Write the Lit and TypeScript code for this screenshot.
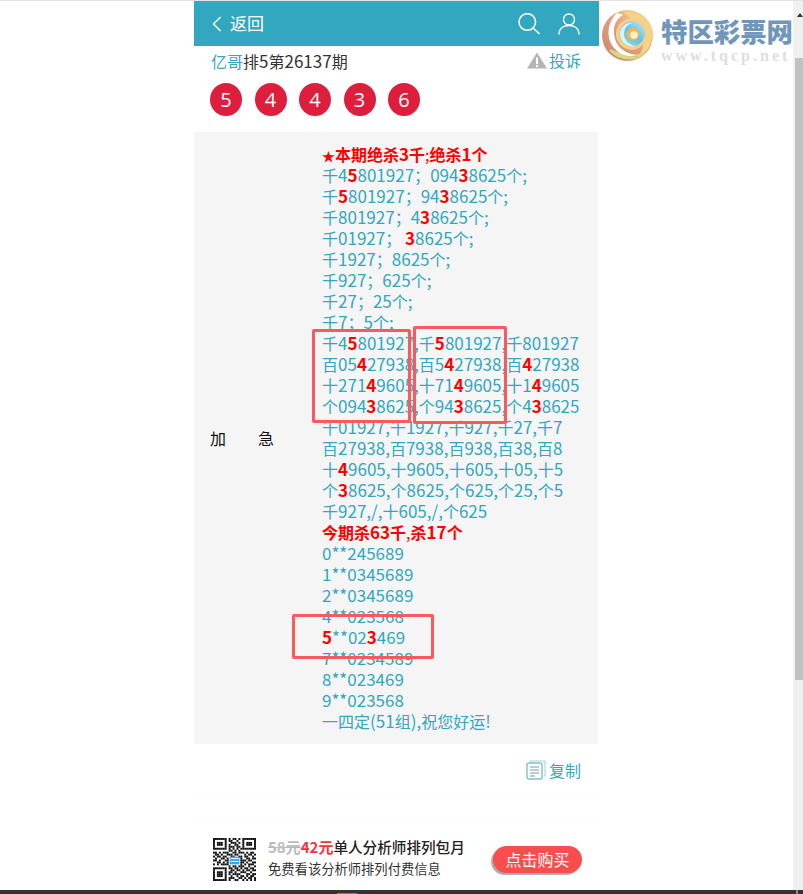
import { LitElement, html, css, svg } from "lit";
import { customElement } from "lit/decorators.js";

const qrCells = [
  "1111111010110101111111","1000001011001001000001","1011101001110101011101","1011101010011001011101",
  "1000001011101101000001","1111111010101011111111","0000000011010100000000","1101011100110111010110",
  "0110100111011000101101","1011011001100110110010","0100110100000010011011","1101001100000011101100",
  "0011010100000011010011","1010111100000010101110","0000000010110111001001","1111111011011010110110",
  "1000001001101101011011","1011101011010011100100","1011101010111100011011","1011101001001011010110",
  "1000001011100110101101","1111111010011001010101",
];

/* Latin runs sit at a slightly larger size than the CJK runs, as in the reference. */
const mix = (s: string) =>
  s.split(/([\u2E80-\u9FFF\uFF00-\uFFEF]+)/).map((p, i) => (i % 2 || !p ? p : html`<span class="n">${p}</span>`));

@customElement("app-root")
export class AppRoot extends LitElement {
  static styles = css`
    :host { display: block; height: 894px; overflow: hidden; background: #fff; font-family: "Noto Sans CJK SC", "Open Sans", sans-serif; position: relative; }
    .top-line { height: 1px; background: #e4e4e4; }
    .page { width: 405px; margin-left: 194px; position: relative; }
    .header { height: 45px; background: #32a7bf; display: flex; align-items: center; padding: 0 19px 0 18px; color: #fff; font-size: 17px; box-sizing: border-box; }
    .back { display: flex; align-items: center; gap: 8px; flex: 1; }
    .back span { position: relative; top: -1px; }
    .head-icons { display: flex; gap: 18px; align-items: center; }
    .title-row { display: flex; justify-content: space-between; align-items: center; height: 30px; padding: 0 18px 2px 17px; box-sizing: border-box; font-size: 16px; color: #333; }
    .n { font-size: 17px; }
    .author { color: #32a7bf; }
    .report { display: flex; align-items: center; gap: 2px; color: #32a7bf; }
    .balls { display: flex; gap: 12.5px; padding: 7px 0 0 16px; height: 49px; box-sizing: border-box; }
    .ball { width: 32px; height: 33px; border-radius: 50%; background: #dd1f3d; color: #fff; font-size: 20px; line-height: 33px; text-align: center; font-family: "Open Sans", sans-serif; }
    .panel { width: 404px; height: 612px; background: #f5f5f5; margin-top: 7px; display: grid; grid-template-columns: 128px 1fr; box-sizing: border-box; }
    .label { display: flex; align-items: center; padding: 0 0 0 16px; font-size: 16px; color: #111; }
    .content { padding-top: 11px; font-size: 16px; line-height: 21px; color: #32a7bf; }
    .content > div { white-space: pre; height: 21px; }
    .content b { color: #f00; font-weight: 700; }
    .content .thin { font-weight: 400; }
    .star { font-size: 13px; }
    .copy-row { display: flex; justify-content: flex-end; align-items: center; gap: 3px; padding: 3px 17px 0 0; width: 404px; box-sizing: border-box; font-size: 16px; color: #32a7bf; height: 49px; }
    .rule { height: 1px; background: #fbfbfb; }
    .gap { height: 24px; }
    .buy { display: flex; align-items: flex-start; margin-top: 19px; padding-left: 19px; }
    .qr { width: 43px; height: 43px; display: block; }
    .buy-text { margin-left: 12px; margin-top: -1px; }
    .buy-title { font-size: 15px; line-height: 20px; font-weight: 500; color: #222; white-space: nowrap; }
    .buy-title .plain { font-size: 14.6px; }
    .old { color: #bbb; text-decoration: line-through; font-weight: 700; }
    .new { color: #f5333f; font-weight: 700; }
    .buy-sub { font-size: 13.3px; line-height: 20px; margin-top: 2px; color: #333; white-space: nowrap; }
    .buy-btn { margin: 8px 17px 0 auto; width: 89px; height: 27px; border-radius: 14px; background: #fa4d4d; box-shadow: -2px 2px 1px #aaa; color: #fff; font-size: 16px; line-height: 26px; text-align: center; }
    .bottom { position: absolute; left: 0; right: 0; top: 890px; height: 4px; background: #333; }
    .bottom i { position: absolute; left: 337px; top: 3px; width: 20px; height: 1px; background: #3a8fd8; }
    .bottom u { position: absolute; left: 796px; top: 0; width: 2px; height: 4px; background: #888; }
    .box { position: absolute; border: 3px solid #fb5a5c; border-radius: 2px; box-sizing: border-box; pointer-events: none; }
    .box.a { left: 312px; top: 329px; width: 99px; height: 94px; }
    .box.b { left: 413px; top: 326px; width: 94px; height: 98px; }
    .box.c { left: 292px; top: 614px; width: 142px; height: 45px; }
    .logo { position: absolute; left: 602px; top: 10px; width: 192px; height: 54px; display: flex; }
    .swirl { flex: none; }
    .logo-text { margin-left: 8px; display: flex; flex-direction: column; }
    .logo-cn { font-size: 26.4px; line-height: 33px; margin-top: 4px; font-weight: 900; color: #7097ba; white-space: nowrap; }
    .logo-en { font-family: "Liberation Serif", serif; font-weight: 700; font-size: 16px; line-height: 16px; margin-top: 1px; letter-spacing: 3px; color: #dedede; white-space: nowrap; }
    .sb { position: absolute; top: 1px; right: 0; width: 10px; height: 889px; background: #f0f0f0; }
    .sb i { display: block; position: absolute; left: 2px; right: 0; top: 57px; height: 622px; background: #c1c1c1; }
    .sb b { position: absolute; right: 0; top: 12px; border: 3px solid transparent; border-top: 0; border-bottom: 4px solid #333; }
  `;

  render() {
    return html`
      <div class="top-line"></div>
      <div class="page">
        <div class="header">
          <div class="back">
            <svg width="10" height="16" viewBox="0 0 10 16"><path d="M8.5 1 L1.5 8 L8.5 15" fill="none" stroke="#fff" stroke-width="1.4"/></svg>
            <span>返回</span>
          </div>
          <div class="head-icons">
            <svg width="22" height="22" viewBox="0 0 22 22"><circle cx="9.3" cy="9" r="8.3" fill="none" stroke="#fff" stroke-width="1.5"/><path d="M15.5 15.5 L21.5 21" stroke="#fff" stroke-width="1.6"/></svg>
            <svg width="22" height="22" viewBox="0 0 22 22"><circle cx="11" cy="6.5" r="5.5" fill="none" stroke="#fff" stroke-width="1.4"/><path d="M1 21.5 C1 15 6 12.5 11 12.5 C16 12.5 21 15 21 21.5" fill="none" stroke="#fff" stroke-width="1.4"/></svg>
          </div>
        </div>
        <div class="title-row">
          <div><span class="author">亿哥</span>${mix("排5第26137期")}</div>
          <div class="report">
            <svg width="20" height="17" viewBox="0 0 20 17"><path d="M10 0.5 L20 16.5 L0 16.5 Z" fill="#b5b5b5"/><rect x="9" y="5.5" width="2" height="6.5" fill="#fff"/><rect x="9" y="13" width="2" height="2" fill="#fff"/></svg>
            <span>投诉</span>
          </div>
        </div>
        <div class="balls">
          ${["5", "4", "4", "3", "6"].map((n) => html`<div class="ball">${n}</div>`)}
        </div>
        <div class="panel">
          <div class="label"><span>加　　急</span></div>
          <div class="content">${this.lines()}</div>
        </div>
        <div class="copy-row">
          <svg width="20" height="20" viewBox="0 0 20 20" fill="none"><path d="M4 2 V1 H19 V16 H18" stroke="#9fd2dd" stroke-width="1"/><rect x="1" y="3" width="15" height="16" rx="2" stroke="#7cc0cf" stroke-width="1.4"/><path d="M4 7 H13 M4 10 H13 M4 13 H13 M4 16 H9" stroke="#7a9aa5" stroke-width="1"/></svg>
          <span>复制</span>
        </div>
        <div class="rule"></div>
        <div class="gap"></div>
        <div class="rule"></div>
        <div class="buy">
          ${this.qr()}
          <div class="buy-text">
            <div class="buy-title"><span class="old">58元</span><span class="new">42元</span><span class="plain">单人分析师排列包月</span></div>
            <div class="buy-sub">免费看该分析师排列付费信息</div>
          </div>
          <div class="buy-btn">点击购买</div>
        </div>
      </div>
      <div class="box a"></div>
      <div class="box b"></div>
      <div class="box c"></div>
      <div class="logo">
        ${this.swirl()}
        <div class="logo-text">
          <div class="logo-cn">特区彩票网</div>
          <div class="logo-en">www.tqcp.net</div>
        </div>
      </div>
      <div class="sb"><b></b><i></i></div>
      <div class="bottom"><i></i><u></u></div>
    `;
  }

  private lines() {
    const raw = [
      "千4[5]801927；094[3]8625个;",
      "千[5]801927；94[3]8625个;",
      "千801927；4[3]8625个;",
      "千01927； [3]8625个;",
      "千1927；8625个;",
      "千927；625个;",
      "千27；25个;",
      "千7；5个;",
      "千4[5]801927,千[5]801927,千801927",
      "百05[4]27938,百5[4]27938,百[4]27938",
      "十271[4]9605,十71[4]9605,十1[4]9605",
      "个094[3]8625,个94[3]8625,个4[3]8625",
      "千01927,千1927,千927,千27,千7",
      "百27938,百7938,百938,百38,百8",
      "十[4]9605,十9605,十605,十05,十5",
      "个[3]8625,个8625,个625,个25,个5",
      "千927,/,十605,/,个625",
    ];
    const tail = [
      "0**245689",
      "1**0345689",
      "2**0345689",
      "4**023568",
      "[5]**02[3]469",
      "7**0234589",
      "8**023469",
      "9**023568",
      "一四定(51组),祝您好运!",
    ];
    const row = (l: string) => {
      const parts = l.split(/\[|\]/);
      return html`<div>${parts.map((p, i) => (i % 2 ? html`<b>${mix(p)}</b>` : mix(p)))}</div>`;
    };
    return html`<div><b><span class="star">★</span>${mix("本期绝杀3千")}<span class="thin">;</span>${mix("绝杀1个")}</b></div>${raw.map(row)}<div><b>${mix("今期杀63千")}<span class="thin">,</span>${mix("杀17个")}</b></div>${tail.map(row)}`;
  }

  private qr() {
    const s = 2;
    const rects = [];
    for (let y = 0; y < qrCells.length; y++) {
      for (let x = 0; x < qrCells[y].length; x++) {
        if (qrCells[y][x] === "1") rects.push(svg`<rect x=${x * s} y=${y * s} width=${s} height=${s} fill="#111"/>`);
      }
    }
    return html`<svg class="qr" viewBox="0 0 44 44">${rects}<rect x="17" y="19" width="10" height="8" fill="#3aa6e8"/><path d="M18 21 H26 M18 24 H26" stroke="#fff"/></svg>`;
  }

  private swirl() {
    return html`<svg class="swirl" width="51" height="51" viewBox="0 0 51 51">
      <defs>
        <linearGradient id="base" x1="0.9" y1="0.05" x2="0.1" y2="0.95">
          <stop offset="0" stop-color="#f8dd8e"/><stop offset="0.45" stop-color="#e8a07e"/><stop offset="1" stop-color="#c88a70"/>
        </linearGradient>
        <linearGradient id="low" x1="0" y1="0" x2="1" y2="0">
          <stop offset="0" stop-color="#e9dc7a"/><stop offset="0.6" stop-color="#c9d98a"/><stop offset="1" stop-color="#9a7a6a"/>
        </linearGradient>
        <linearGradient id="cy" x1="0.2" y1="0.9" x2="0.9" y2="0.1">
          <stop offset="0" stop-color="#8fd6c4"/><stop offset="0.5" stop-color="#5fc3ec"/><stop offset="1" stop-color="#a7dff2"/>
        </linearGradient>
        <filter id="soft"><feGaussianBlur stdDeviation="0.6"/></filter>
      </defs>
      <g filter="url(#soft)">
        <circle cx="25.5" cy="25.5" r="25.5" fill="url(#base)"/>
        <path d="M22 2 C36 0 49 10 50 25 C50 36 44 44 36 47 C43 38 44 24 36 15 C30 9 26 6 22 2 Z" fill="#f6d486"/>
        <path d="M8 40 C16 50 34 52 43 42 C36 47 22 47 8 40 Z" fill="url(#low)" stroke="#d8d67e" stroke-width="2"/>
        <path d="M15 3 C5 12 3 30 14 40 C20 46 28 47 34 45 C23 44 13 36 12 24 C11 16 14 9 21 5 C18 4 17 3 15 3 Z" fill="#fff"/>
        <path d="M14 24 C14 14 22 8 31 8 C40 9 46 16 45 25 C44 34 37 40 29 40 C20 39 14 32 14 24 Z" fill="#f3cf8e"/>
        <circle cx="30" cy="24" r="12.5" fill="url(#cy)"/>
        <path d="M18 24 C18 32 26 38 34 36 C27 35 22 30 22 24 C22 18 26 14 31 13 C24 12 18 17 18 24 Z" fill="#fff" opacity="0.75"/>
        <circle cx="31" cy="24" r="6.5" fill="#f0b45a"/>
        <circle cx="32" cy="25" r="3.8" fill="#fdf3c8"/>
      </g>
    </svg>`;
  }
}
